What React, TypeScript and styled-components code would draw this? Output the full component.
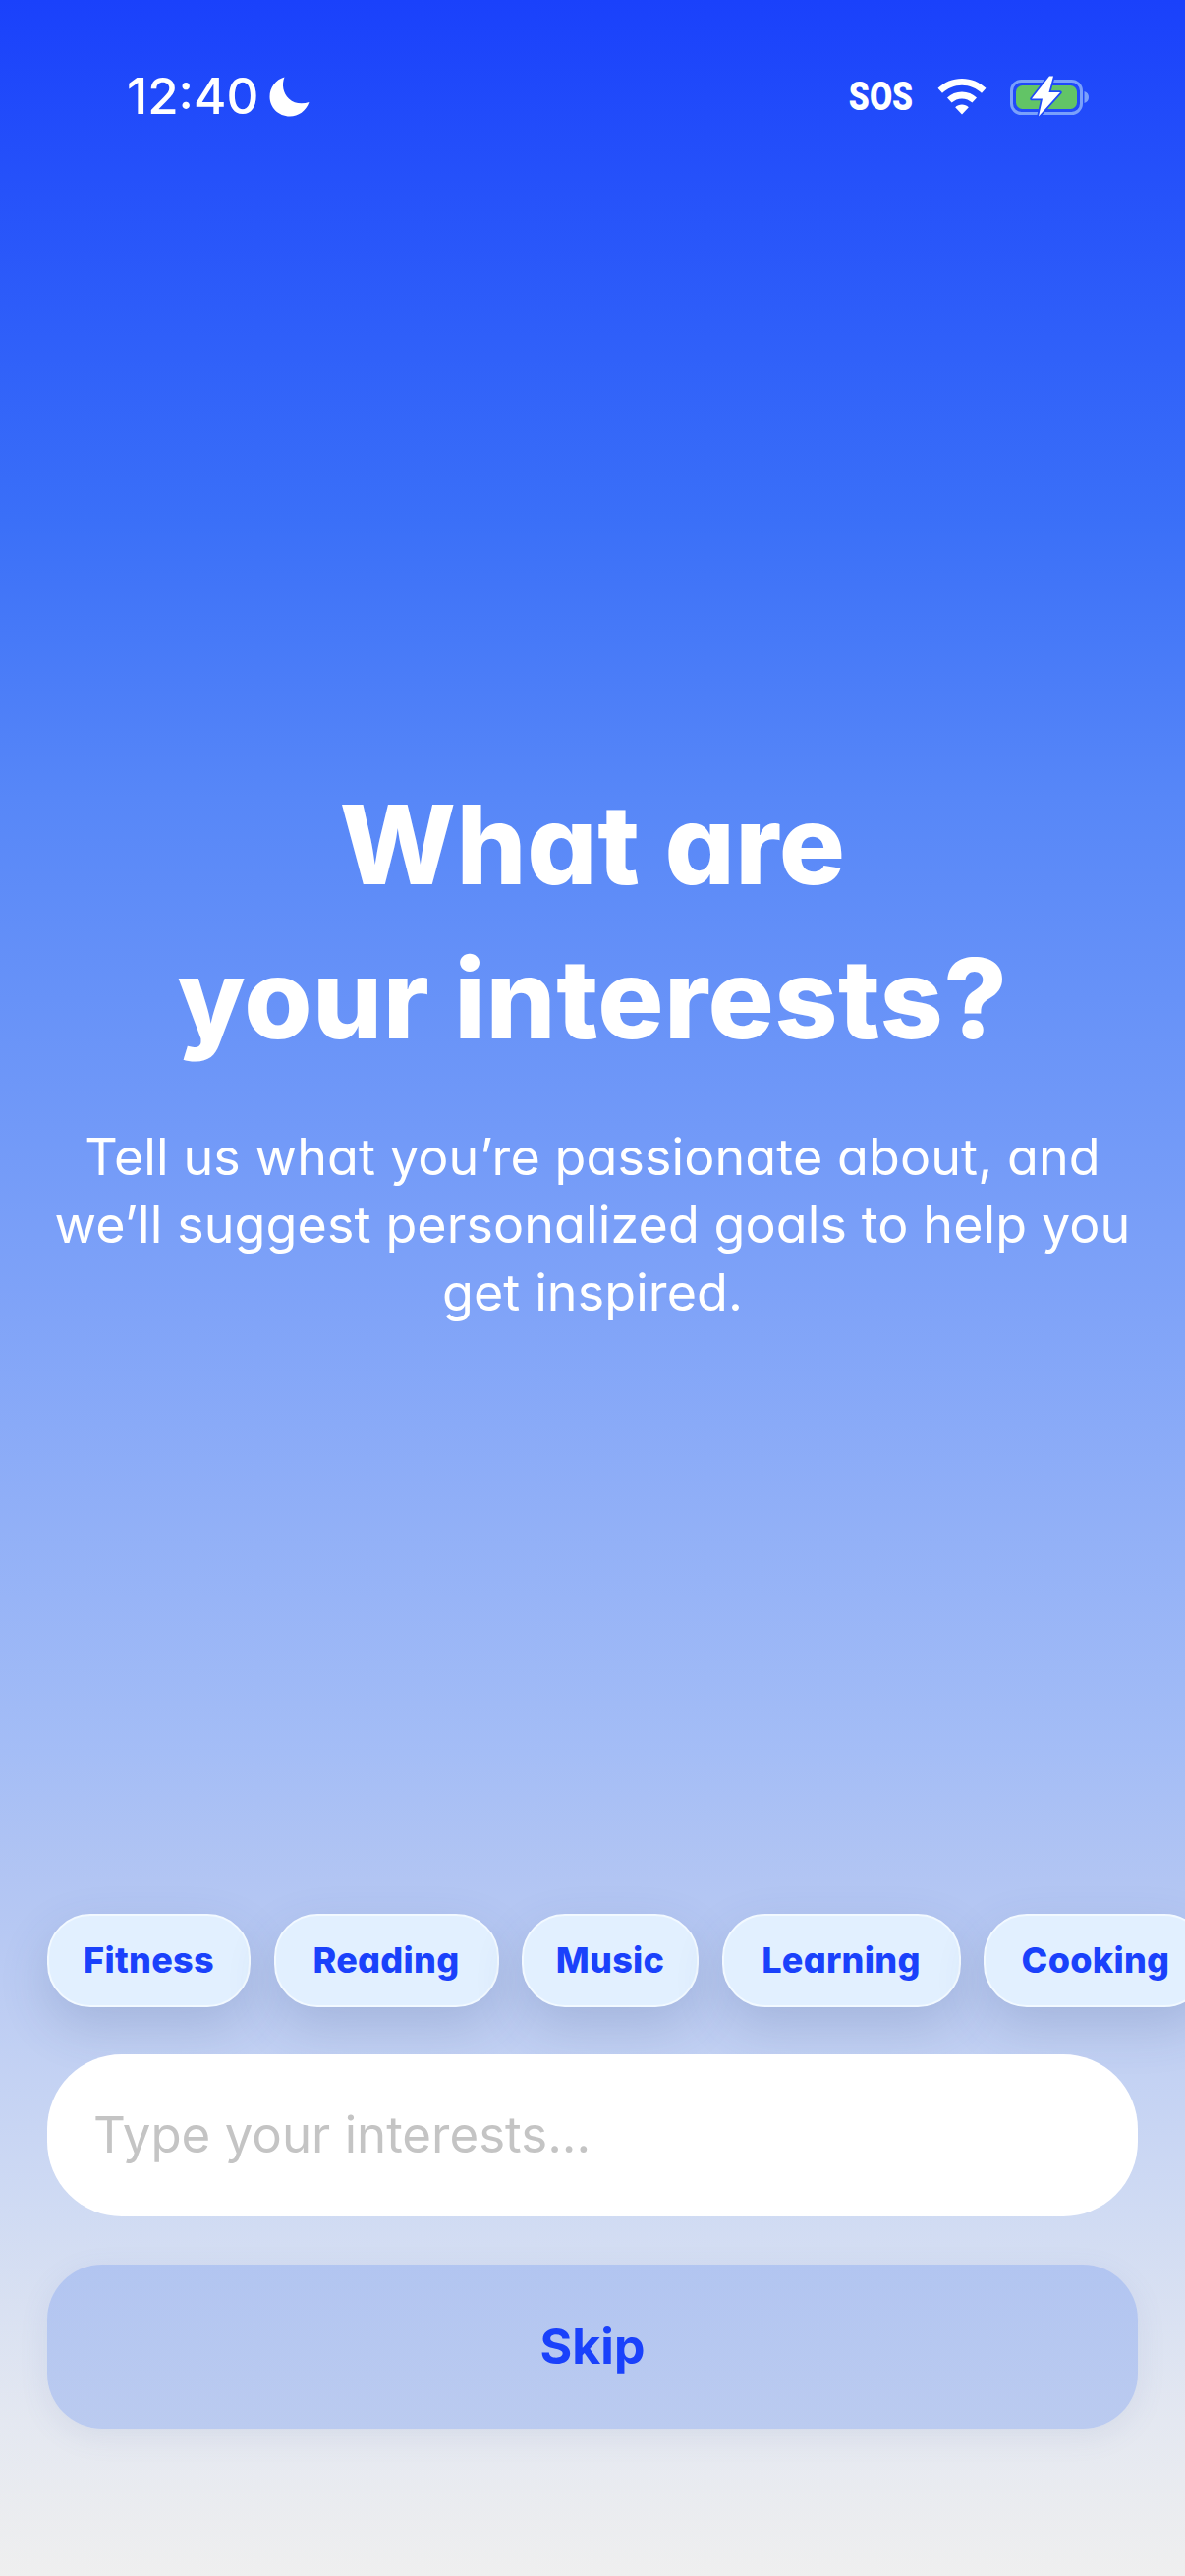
import React from "react";
import styled, { createGlobalStyle } from "styled-components";

const Global = createGlobalStyle`
  html, body { margin: 0; padding: 0; }
  body { font-family: "Inter", "Noto Sans", sans-serif; font-feature-settings: "cv11" 1; }
`;

const Screen = styled.div`
  width: 1206px;
  height: 2622px;
  overflow: hidden;
  display: flex;
  flex-direction: column;
  background: linear-gradient(180deg, #1a41fb 0%, #3a6ff8 20%, #5787f8 31%, #7ea2f8 50%, #a4bdf6 68%, #b2c5f3 73%, #d0dbf3 86%, #e4e8f1 94%, #efefef 100%);
`;

const StatusBar = styled.div`
  height: 62px;
  padding: 67px 96px 0 129px;
  display: flex;
  align-items: center;
  justify-content: space-between;
  color: #fff;
`;

const StatusGroup = styled.div`
  display: flex;
  align-items: center;
  gap: ${(p: { $gap: number }) => p.$gap}px;
`;

const Clock = styled.span`
  font-size: 51px;
  font-weight: 500;
  line-height: 62px;
`;

const Sos = styled.span`
  font-family: "Roboto", sans-serif;
  font-size: 41px;
  font-weight: 900;
  line-height: 62px;
  transform: scaleX(0.82);
  width: 67px;
  white-space: nowrap;
  display: flex;
  justify-content: center;
`;

const Hero = styled.div`
  display: flex;
  flex-direction: column;
  align-items: center;
  padding-top: 652px;
`;

const Title = styled.h1`
  margin: 0;
  color: #fff;
  font-size: 112px;
  font-weight: 800;
  line-height: 157px;
  letter-spacing: 0.5px;
  text-align: center;
`;

const Subtitle = styled.p`
  margin: 48px 0 0;
  color: #fff;
  font-size: 52px;
  font-weight: 400;
  line-height: 69px;
  letter-spacing: 0.1px;
  text-align: center;
  white-space: nowrap;
`;

const Bottom = styled.div`
  margin-top: auto;
  padding: 0 0 150px;
  display: flex;
  flex-direction: column;
`;

const ChipRow = styled.div`
  display: flex;
  gap: 23.5px;
  padding-left: 48px;
`;

const Chip = styled.div`
  flex: none;
  box-sizing: border-box;
  height: 95px;
  width: ${(p: { $w: number }) => p.$w}px;
  padding-bottom: 2px;
  border-radius: 44px;
  border: 2px solid #f2f9ff;
  background: #e2f0ff;
  color: #1a41fb;
  font-size: 36px;
  font-weight: 800;
  letter-spacing: 0.3px;
  display: flex;
  align-items: center;
  justify-content: center;
  box-shadow: 0 20px 50px rgba(60, 80, 130, 0.19);
`;

const Field = styled.div`
  box-sizing: border-box;
  margin: 48px 48px 0;
  height: 165px;
  padding: 0 47px 2px;
  border-radius: 76px;
  background: #fff;
  color: #c4c4c4;
  font-size: 51px;
  font-weight: 400;
  display: flex;
  align-items: center;
`;

const SkipButton = styled.div`
  box-sizing: border-box;
  margin: 49px 48px 0;
  height: 167px;
  padding-bottom: 2px;
  border-radius: 56px;
  background: linear-gradient(180deg, #b2c5f1, #bbcbf0);
  color: #1a41fb;
  font-size: 50px;
  font-weight: 700;
  display: flex;
  align-items: center;
  justify-content: center;
  box-shadow: 0 8px 30px rgba(90, 110, 170, 0.1);
`;

const Moon = () => (
  <svg width="41" height="41" viewBox="0 0 41 41" fill="#fff">
    <path d="M15.5 0.5C12.5 8 14 17 20 22.500C25.500 27.500 33 28.500 40.500 26C37.500 35 29.500 40.500 21 40.500C9.500 40.500 0.500 31.500 0.500 20.500C0.500 11 6.500 3 15.500 0.500Z" />
  </svg>
);

const Wifi = () => (
  <svg width="50" height="37" viewBox="0 0 50 37" fill="#fff">
    <path d="M25 0C34.500 0 43 3.700 49.500 9.800L45 14.800C39.700 9.800 32.700 6.800 25 6.800C17.300 6.800 10.300 9.800 5 14.800L0.500 9.800C7 3.700 15.500 0 25 0Z" />
    <path d="M25 13.500C30.800 13.500 36 15.800 40 19.500L35.400 24.500C32.600 22 29 20.400 25 20.400C21 20.400 17.400 22 14.600 24.500L10 19.500C14 15.800 19.200 13.500 25 13.500Z" />
    <path d="M25 26.500C27.600 26.500 30 27.500 31.800 29.200L25 36.500L18.200 29.200C20 27.500 22.400 26.500 25 26.500Z" />
  </svg>
);

const Battery = () => (
  <svg width="82" height="42" viewBox="0 0 82 42">
    <rect x="1.500" y="5.500" width="71" height="33" rx="10" fill="none" stroke="#7aa0fb" strokeWidth="3" />
    <rect x="6" y="10" width="62" height="24" rx="6.500" fill="#62c466" />
    <path d="M75.500 16C78.500 17 80 19 80 22C80 25 78.500 27 75.500 28Z" fill="#7aa0fb" />
    <path d="M40 0.500L22 23.500H33L29 41.500L51 17H39.500L44 0.500Z" fill="#fff" stroke="#1f4af8" strokeWidth="3.500" strokeLinejoin="round" paintOrder="stroke" />
  </svg>
);

const chips: [string, number][] = [
  ["Fitness", 207],
  ["Reading", 229],
  ["Music", 180],
  ["Learning", 243],
  ["Cooking", 228],
];

export default function App() {
  return (
    <Screen>
      <Global />
      <StatusBar>
        <StatusGroup $gap={11}>
          <Clock>12:40</Clock>
          <Moon />
        </StatusGroup>
        <StatusGroup $gap={24}>
          <Sos>SOS</Sos>
          <Wifi />
          <Battery />
        </StatusGroup>
      </StatusBar>
      <Hero>
        <Title>
          What are
          <br />
          your interests?
        </Title>
        <Subtitle>
          Tell us what you’re passionate about, and
          <br />
          we’ll suggest personalized goals to help you
          <br />
          get inspired.
        </Subtitle>
      </Hero>
      <Bottom>
        <ChipRow>
          {chips.map(([label, w]) => (
            <Chip key={label} $w={w}>
              {label}
            </Chip>
          ))}
        </ChipRow>
        <Field>Type your interests...</Field>
        <SkipButton>Skip</SkipButton>
      </Bottom>
    </Screen>
  );
}
